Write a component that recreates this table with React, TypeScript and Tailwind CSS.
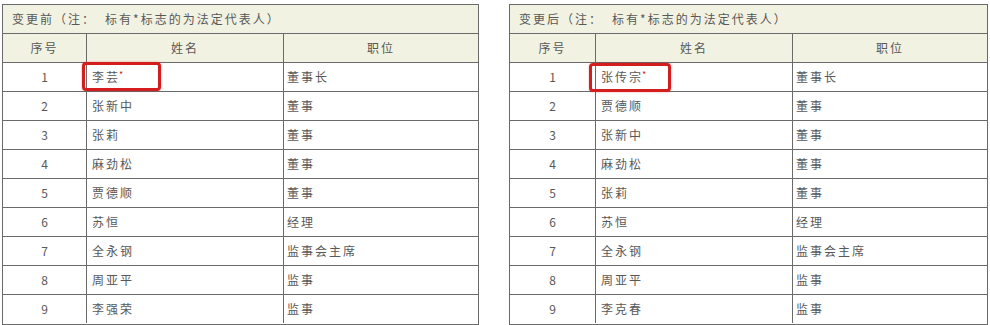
import React from "react";

type Row = { no: number; name: string; title: string; legal?: boolean };

const before: Row[] = [
  { no: 1, name: "李芸", title: "董事长", legal: true },
  { no: 2, name: "张新中", title: "董事" },
  { no: 3, name: "张莉", title: "董事" },
  { no: 4, name: "麻劲松", title: "董事" },
  { no: 5, name: "贾德顺", title: "董事" },
  { no: 6, name: "苏恒", title: "经理" },
  { no: 7, name: "全永钢", title: "监事会主席" },
  { no: 8, name: "周亚平", title: "监事" },
  { no: 9, name: "李强荣", title: "监事" },
];

const after: Row[] = [
  { no: 1, name: "张传宗", title: "董事长", legal: true },
  { no: 2, name: "贾德顺", title: "董事" },
  { no: 3, name: "张新中", title: "董事" },
  { no: 4, name: "麻劲松", title: "董事" },
  { no: 5, name: "张莉", title: "董事" },
  { no: 6, name: "苏恒", title: "经理" },
  { no: 7, name: "全永钢", title: "监事会主席" },
  { no: 8, name: "周亚平", title: "监事" },
  { no: 9, name: "李克春", title: "监事" },
];

function Table({
  prefix,
  rows,
  col1,
  width,
  boxLeft,
  boxTop,
  boxW,
}: {
  prefix: string;
  rows: Row[];
  col1: string;
  width: string;
  boxLeft: string;
  boxTop: string;
  boxW: string;
}) {
  return (
    <div className={`relative ${width} border border-[#6a6a6a] bg-white`}>
      <div className="flex h-[29px] items-center border-b border-[#6a6a6a] bg-[#f2f2e2] pl-[9px] text-[12px] tracking-[2px]">
        {prefix}（注：<span className="ml-[9px]">标有*标志的为法定代表人）</span>
      </div>
      <div className="flex h-[29px] border-b border-[#6a6a6a] bg-[#f2f2e2] text-[12px] tracking-[2px]">
        <div className={`${col1} flex items-center justify-center border-r border-[#6a6a6a]`}>序号</div>
        <div className="flex w-[197px] items-center justify-center border-r border-[#6a6a6a]">姓名</div>
        <div className="flex flex-1 items-center justify-center">职位</div>
      </div>
      {rows.map((r, i) => (
        <div
          key={r.no}
          className={`flex text-[12px] tracking-[2px] ${i < rows.length - 1 ? "h-[29px] border-b border-[#6a6a6a]" : "h-[28px]"}`}
        >
          <div className={`${col1} flex items-center justify-center border-r border-[#6a6a6a] tracking-normal`}>{r.no}</div>
          <div className="flex w-[197px] items-center border-r border-[#6a6a6a] pl-[5px]">
            {r.name}
            {r.legal && <span className="relative -top-[2px] ml-[-1px] text-[9px] text-[#d21c1c]">*</span>}
          </div>
          <div className="flex flex-1 items-center pl-[3px]">{r.title}</div>
        </div>
      ))}
      <div
        className={`pointer-events-none absolute ${boxLeft} ${boxTop} ${boxW} h-[29px] rounded-[4px] border-[3px] border-[#d41e1e] shadow-[0_0_2px_rgba(200,0,0,0.4)]`}
      />
    </div>
  );
}

export default function App() {
  return (
    <div
      className="flex h-[325px] w-[990px] gap-[30px] bg-white pl-[2px] pt-[4px] text-[#585858]"
      style={{ fontFamily: '"Noto Sans CJK SC", "Noto Sans", sans-serif' }}
    >
      <Table
        prefix="变更前"
        rows={before}
        col1="w-[84px]"
        width="w-[477px]"
        boxLeft="left-[79px]"
        boxTop="top-[57px]"
        boxW="w-[79px]"
      />
      <Table
        prefix="变更后"
        rows={after}
        col1="w-[86px]"
        width="w-[479px]"
        boxLeft="left-[79px]"
        boxTop="top-[58px]"
        boxW="w-[82px]"
      />
    </div>
  );
}
